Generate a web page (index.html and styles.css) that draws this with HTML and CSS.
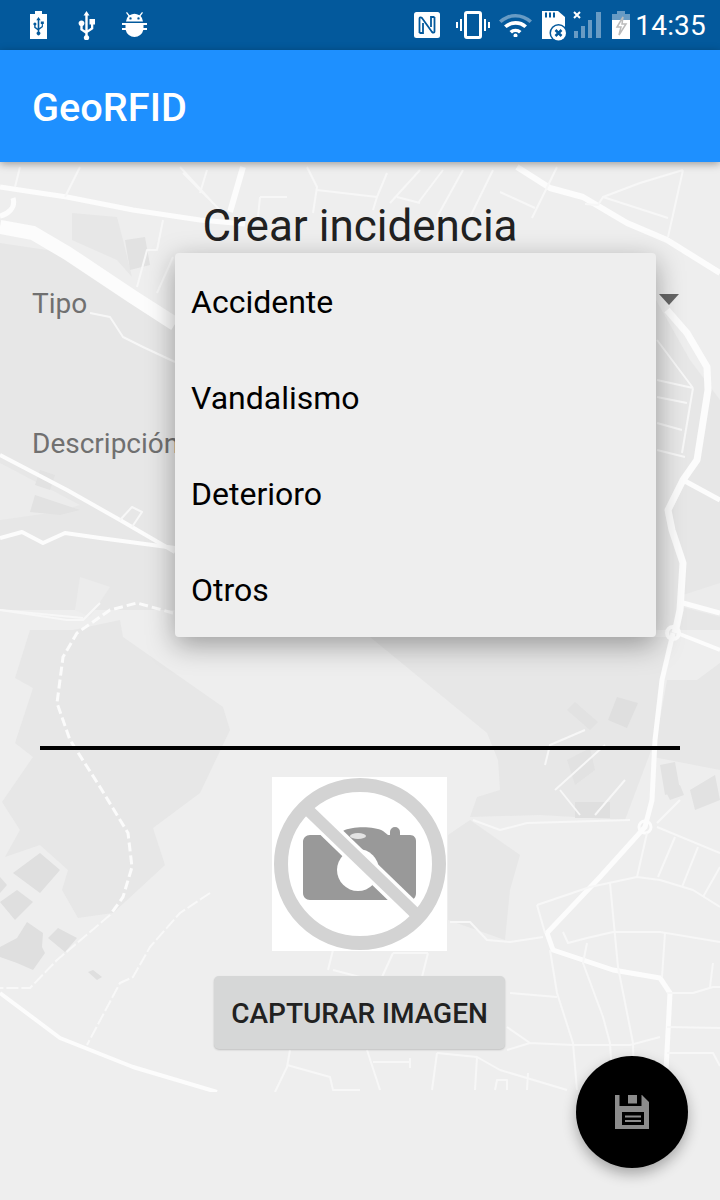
FILE: index.html
```html
<!DOCTYPE html>
<html lang="es">
<head>
<meta charset="utf-8" />
<title>GeoRFID</title>
<link rel="stylesheet" href="styles.css">
</head>
<body>
<div class="statusbar">
  <div class="status-left">
    <svg class="ic ic-batt" width="17" height="28" viewBox="0 0 17 28"><path class="w" d="M5 0h7v3h5v25H0V3h5z"/><path class="b" d="M8.500 6l2.200 3.200H9.300V17l2.500-1.800V13h-1v-2.600h3V13h-.9v3L9.300 18.800v2a1.800 1.800 0 1 1-1.600 0v-1.500L4.200 16.800v-2.400a1.500 1.500 0 1 1 1.400 0v1.700l2.100 1.400V9.200H6.300z"/></svg>
    <svg class="ic ic-usb" width="17" height="29" viewBox="0 0 17 29"><path class="w" d="M8.500 0l3 4.500H9.700V19l3.300-2.200v-3.300h-1.500V8H17v5.500h-1.700v4.500L9.700 21.700v2.600a2.700 2.700 0 1 1-2.400 0v-1.800L2.300 19v-4a2.900 2.900 0 1 1 2.400 0v2.900l2.600 1.700V4.500H5.500z"/></svg>
    <svg class="ic ic-droid" width="25" height="27" viewBox="0 0 25 27"><path class="w" d="M5 0l2.600 3.300a9 9 0 0 1 9.800 0L20 0l1 .8-2.400 3.300A8.500 8.500 0 0 1 21 9.500H4a8.500 8.500 0 0 1 2.400-5.400L4 .8zM8.500 5.200a1.200 1.200 0 1 0 0 2.400 1.200 1.200 0 0 0 0-2.400zm8 0a1.200 1.200 0 1 0 0 2.400 1.200 1.200 0 0 0 0-2.400zM0 11h25v2H21.500v3H25v2H21.300A9 9 0 0 1 3.700 18H0v-2h3.500v-3H0z"/></svg>
    <svg class="ic ic-nfc" width="26" height="26" viewBox="0 0 26 26"><rect class="w" width="26" height="26" rx="2.500"/><path class="nfc-n" d="M5.500 21V6.500c0-1.500 1.500-1.500 2.500-.5l10 14c1 1 2.500 1 2.500-.5V5M5.500 21H9V11M20.500 5H17v10"/></svg>
    <svg class="ic ic-vib" width="34" height="28" viewBox="0 0 34 28"><rect class="wl" x="9.500" y="1.500" width="15" height="25" rx="1.500"/><path class="w" d="M4 8h2v12H4zM0 11h2v6H0zM28 8h2v12h-2zM32 11h2v6h-2z"/></svg>
    <svg class="ic ic-wifi" width="33" height="25" viewBox="0 0 33 25"><path class="dim" d="M0 8.500a24 24 0 0 1 33 0l-2.500 2.500a20.500 20.500 0 0 0-28 0z"/><path class="w" d="M5 13.500a17 17 0 0 1 23 0l-2.600 2.600a13.500 13.500 0 0 0-17.800 0zM10.500 19a9 9 0 0 1 12 0L20 21.500a5.500 5.500 0 0 0-7 0z"/><circle class="w" cx="16.500" cy="23.500" r="2"/></svg>
    <svg class="ic ic-sd" width="26" height="31" viewBox="0 0 26 31"><path class="w" d="M0 0h16l7 6v22H0z"/><path class="b" d="M3 1.500h2v5H3zM7 1.500h2v5H7zM11 1.500h2v5h-2z"/><circle class="b" cx="16.500" cy="22" r="9"/><circle class="w" cx="16.500" cy="22" r="7.500"/><path class="xb" d="M13.500 19l6 6m0-6l-6 6"/></svg>
    <svg class="ic ic-signal" width="29" height="28" viewBox="0 0 29 28"><path class="xw" d="M1 1l6 6m0-6l-6 6"/><path class="dim" d="M1 20h4v7H1zM8 15h4v12H8zM15 9h4v18h-4zM23 1h5v26h-5z"/></svg>
    <svg class="ic ic-batt2" width="18" height="28" viewBox="0 0 18 28"><path class="dim" d="M5 0h8v3h5v6H0V3h5z"/><path class="w" d="M0 9h18v19H0z"/><path class="bolt" d="M11 6L5 16h4l-2 8 7-11h-4z"/></svg>
  </div>
  <span class="clock">14:35</span>
</div>
<header class="appbar"><h1>GeoRFID</h1></header>
<main class="screen">
  <svg class="map" width="720" height="930" viewBox="0 162 720 930">
    <!-- zonas -->
    <path class="area" d="M0 243L67 253 175 325V610H0z"/>
    <path class="area-light" d="M0 463L80 505 57 512 0 520zM80 577L110 587 90 617 75 610z"/>
    <path class="area" d="M72 213L117 217 123 240 132 277 117 260 72 240z"/>
    <path class="area" d="M656 300L690 360 720 400V630H656z"/>
    <path class="area-light" d="M683 595L720 583V617L682 607z"/>
    <path class="area" d="M30 630L15 678 33 688 15 743 33 757 2 802 20 830 5 857 40 845 68 870 62 890 78 918 113 913 165 865 153 828 200 793 230 730 223 707 123 637 120 620 73 630z"/>
    <path class="area" d="M370 637L487 733 498 760 500 790 477 797 470 817 540 815 625 820 655 740 660 680 672 637z"/>
    <path class="area" d="M448 835L470 820 520 855 510 890 505 940 448 920z"/>
    <path class="area" d="M667 680L697 680 720 663V770L653 757z"/>
    <path class="bldg" d="M617 697L638 703 627 728 608 720zM575 802H610V818H575z"/>
    <path class="bldg" d="M13 873L40 853 60 870 40 893zM0 902L17 890 33 902 15 920zM0 947L17 938 27 922 43 933 42 947 45 953 33 970 17 963 0 957zM48 938L58 928 77 938 65 952zM0 877L7 885 0 893zM88 972L93 970 102 977 97 980z"/>
    <path class="bldg-soft" d="M125 240L145 237 150 265 130 270zM575 702L598 722 590 730 567 710zM567 760L590 748 595 770 575 785zM660 765L675 762 680 790 665 795zM665 790L680 785 684 795 670 800zM690 790L715 775 720 800 695 810zM40 470L55 475 50 490 35 485zM35 495L80 510 60 515 30 512z"/>

    <!-- calles -->
    <g class="road">
      <path class="w5" d="M0 187L33 192 67 197 133 210 200 220 245 224"/>
      <path class="w5" d="M13 198C16 208 8 214 0 216"/>
      <path class="w13" d="M0 227L33 233 67 253 133 297 175 324"/>
      <path class="w6" d="M243 167L230 212"/>
      <path class="w6" d="M517 167L550 188 583 197 627 223 667 240 720 273"/>
      <path class="w7" d="M667 310L687 333 707 367 708 390 697 460 683 480 668 510 672 530 683 563 680 610 675 633"/>
      <path class="w5" d="M683 480L720 500M683 603L720 613"/>
      <path class="w5" d="M673 633L662 680 655 740 652 800 645 827 600 877 547 933 553 950 613 970 660 978 670 993 665 1091"/>
      <path class="w4" d="M677 633L720 650"/>
      <path class="w4" d="M0 455L67 490 120 520 175 552"/>
      <path class="w4" d="M0 538L22 532 43 543 65 533 100 538 175 548"/>
      <path class="w4" d="M0 993L60 1038 133 1067 217 1092"/>
      <circle class="w4" cx="673" cy="633" r="6"/>
      <circle class="w3" cx="645" cy="827" r="6"/>
    </g>
    <g class="road-sm">
      <path d="M20 167L15 187M80 167L65 197M180 167L213 203M207 170L200 193M183 173L220 210"/>
      <path d="M163 220L157 250H147L137 287M173 257L157 293M90 313L110 317 123 337 143 347 175 362"/>
      <path d="M120 520L132 507 142 512 132 527M0 610L83 618"/>
      <path d="M260 197L258 217M260 197H287M307 167L317 187 313 213M317 190L377 197 373 210M387 173L377 197M420 170L390 203M443 170L418 203M463 170L437 217M493 170L470 217M397 197L420 203"/>
      <path d="M557 167L532 218M500 192L535 208M683 170L668 237M683 170L640 183 603 197 668 218M603 197L598 205 585 204"/>
      <path d="M657 340L693 388M657 380L693 388M657 397L687 403M657 423L682 430M657 450L685 457M693 388L682 453"/>
      <path d="M0 610L67 620H83L100 603"/>
      <path d="M473 820L500 830 527 823 630 820M680 800L657 823M657 827L720 853M647 833L637 877M675 837L658 877M698 847L682 887M720 867L703 897"/>
      <path d="M537 905L590 887 637 877 660 880 693 890 720 907M537 905L545 933M563 932L568 943 587 938 613 932 660 932 720 942"/>
      <path d="M610 883L618 967 633 1043 634 1091M665 933L662 977M550 950L557 993 573 1043 577 1090M587 943L583 963 603 1017 610 1043 613 1090"/>
      <path d="M510 993L557 997M667 993H693L713 987H720M713 963L710 987M667 1027L720 1028M667 1053H713L720 1066"/>
      <path d="M507 1027L530 1043 573 1045 630 1045 660 1037M507 1050L530 1043M437 1053L477 1057 500 1070 567 1090"/>
      <path d="M367 1050L380 1090M373 1062H410M410 1058V1068M437 1053L432 1090M477 1057L475 1090M495 1090L497 1080H507V1090M527 1090L528 1073"/>
      <path d="M450 922H470L487 940 510 942 543 937M393 953L382 977M428 953L422 977M393 953H428M333 950L328 970M333 970L360 977"/>
      <path d="M290 1050L287 1067 275 1092M287 1065L330 1077 333 1090H360"/>
      <path d="M545 765L550 745 585 730M605 745L555 790M625 780L595 815M560 790L580 815"/>
      <path class="dash" d="M173 613L137 603 110 610 77 633 63 657 57 703 70 740 100 787 128 833 132 867 123 897 110 915"/>
      <path class="dash-thin" d="M110 915L57 960 30 988H0M210 893L180 913 150 947 133 977 120 983 87 1045"/>
    </g>
  </svg>

  <h2 class="title">Crear incidencia</h2>
  <div class="field field-tipo">
    <label>Tipo</label>
    <span class="caret"></span>
  </div>
  <div class="field field-desc">
    <label>Descripción</label>
  </div>
  <div class="rule"></div>
  <div class="photo">
    <svg width="175" height="174" viewBox="0 0 175 174">
      <rect class="photo-bg" width="175" height="174"/>
      <path class="cam" d="M38 58H62L71 54C80 49 102 49 111 54L116 58H118V55A5 5 0 0 1 128 55V58H138C142 58 144 61 144 64V116C144 120 142 123 138 123H38C34 123 31 120 31 116V65C31 61 34 58 38 58Z"/>
      <ellipse class="cam-glint" cx="86" cy="59" rx="8" ry="3"/>
      <circle class="cam-lens" cx="86" cy="93" r="21"/>
      <path class="slash-halo" d="M30 27L149 142"/>
      <path class="slash" d="M34 31L146 139"/>
      <circle class="ring" cx="88" cy="87" r="79"/>
    </svg>
  </div>
  <button class="capture" type="button">CAPTURAR IMAGEN</button>

  <ul class="dropdown">
    <li>Accidente</li>
    <li>Vandalismo</li>
    <li>Deterioro</li>
    <li>Otros</li>
  </ul>

  <button class="fab" type="button">
    <svg width="34" height="34" viewBox="0 0 34 34"><path class="disk" fill-rule="evenodd" d="M0 0h27l7 7v27H0zM4.500 0v11h22V0zM7 17v13h22V17z"/><path class="disk" d="M10 20.500h16v2H10zM10 25h16v2H10zM13 0h9v8.500h-9z"/></svg>
  </button>
</main>
</body>
</html>
```

FILE: styles.css
```css
html,body{margin:0;padding:0;}
body{width:720px;height:1200px;overflow:hidden;background:#eee;font-family:Roboto,"Liberation Sans",sans-serif;}

.statusbar{position:relative;height:50px;background:#03599c;}
.status-left{position:absolute;top:0;left:0;}
.ic{position:absolute;top:11px;}
.ic-batt{left:30px;}
.ic-usb{left:78px;}
.ic-droid{left:122px;top:12px;}
.ic-nfc{left:414px;top:12px;}
.ic-vib{left:456px;}
.ic-wifi{left:499px;top:12px;}
.ic-sd{left:542px;}
.ic-signal{left:573px;}
.ic-batt2{left:612px;}
.w{fill:#fff;}
.b{fill:#03599c;}
.dim{fill:#689bc4;}
.wl{fill:none;stroke:#fff;stroke-width:3;}
.xb{fill:none;stroke:#03599c;stroke-width:2.500;}
.xw{fill:none;stroke:#fff;stroke-width:2;}
.bolt{fill:none;stroke:#bbb;stroke-width:1.500;}
.nfc-n{fill:none;stroke:#03599c;stroke-width:1.800;}
.clock{position:absolute;right:14px;top:8px;font-size:28px;line-height:36px;color:#fff;letter-spacing:.2px;}

.appbar{position:relative;z-index:2;height:112px;display:flex;align-items:center;padding-left:32px;background:#1e90ff;box-shadow:0 2px 8px rgba(0,0,0,.35);}
.appbar h1{margin:3px 0 0;font-size:39.700px;font-weight:500;color:#fff;}

.screen{position:relative;height:1038px;overflow:hidden;}
.map{position:absolute;top:0;left:0;}
.area{fill:#e7e7e7;}
.area-light{fill:#ececec;}
.bldg{fill:#dfdfdf;}
.bldg-soft{fill:#e2e2e2;}
.road path,.road circle{fill:none;stroke:#fcfcfc;stroke-linejoin:round;}
.w13{stroke-width:14;}
.w7{stroke-width:7;}
.w6{stroke-width:6;}
.w5{stroke-width:5;}
.w4{stroke-width:4;}
.w3{stroke-width:3;}
.road-sm path{fill:none;stroke:#f7f7f7;stroke-width:2;stroke-linejoin:round;}
.road-sm .dash{stroke:#fbfbfb;stroke-width:3;stroke-dasharray:9 4;}
.road-sm .dash-thin{stroke:#f8f8f8;stroke-width:2;stroke-dasharray:12 3;}

.title{position:relative;margin:40px 0 0;text-align:center;font-size:44px;line-height:48px;font-weight:400;color:#212121;}
.field{position:relative;display:flex;align-items:center;justify-content:space-between;height:60px;padding:0 41px 0 32px;}
.field label{font-size:28px;color:#707070;}
.field-tipo{margin-top:23px;}
.field-desc{margin-top:80px;}
.caret{width:0;height:0;border-left:10px solid transparent;border-right:10px solid transparent;border-top:11px solid #666;margin-top:-7px;}
.rule{position:relative;height:4px;margin:273px 40px 0;background:#000;}
.photo{position:relative;width:175px;height:174px;margin:27px 0 0 272px;}
.photo svg{display:block;}
.photo-bg{fill:#fff;}
.cam{fill:#999;}
.cam-glint{fill:#e4e4e4;}
.cam-lens{fill:#fff;}
.ring{fill:none;stroke:#d3d3d3;stroke-width:14;}
.slash{fill:none;stroke:#d3d3d3;stroke-width:12;}
.slash-halo{fill:none;stroke:#fff;stroke-width:19;}
.capture{position:relative;display:block;width:291px;height:73px;margin:25px 0 0 214px;padding:2px 0 0;border:0;border-radius:5px;background:#d6d7d7;box-shadow:0 1px 2px rgba(0,0,0,.2);font-family:inherit;font-size:28px;font-weight:500;color:#212121;}

.dropdown{position:absolute;left:175px;top:91px;width:481px;margin:0;padding:0;list-style:none;background:#eee;border-radius:4px;box-shadow:0 8px 28px rgba(0,0,0,.35);}
.dropdown li{height:96px;line-height:98px;padding-left:16px;font-size:32px;color:#000;}

.fab{position:absolute;right:32px;bottom:32px;display:flex;align-items:center;justify-content:center;width:112px;height:112px;padding:0;border:0;border-radius:50%;background:#000;box-shadow:0 6px 14px rgba(0,0,0,.3);}
.disk{fill:#8c8c8c;}
```
